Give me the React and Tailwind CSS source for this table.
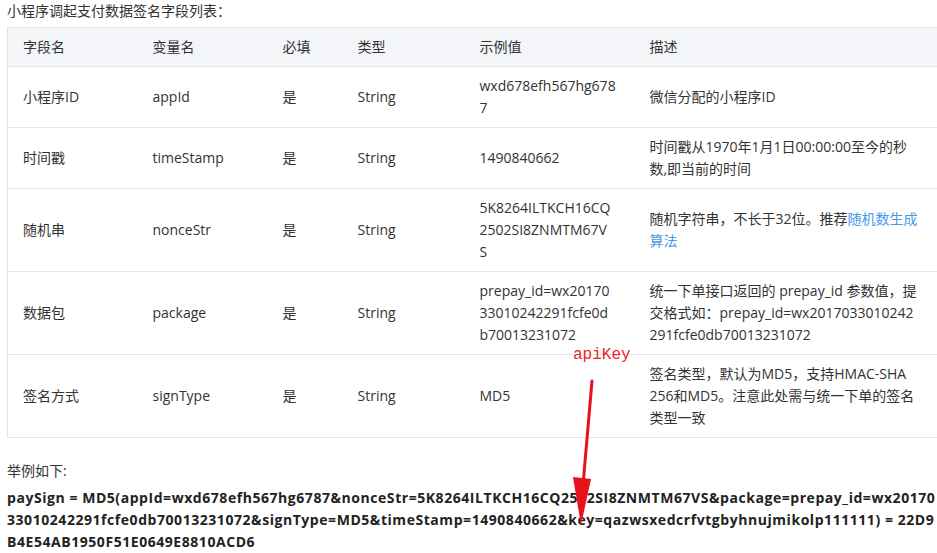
import React from "react";

const Link = ({ children }) => <span className="text-[#459ae9]">{children}</span>;

const rows = [
  { name: "小程序ID", key: "appId", ex: ["wxd678efh567hg678", "7"], desc: ["微信分配的小程序ID"] },
  { name: "时间戳", key: "timeStamp", ex: ["1490840662"], desc: ["时间戳从1970年1月1日00:00:00至今的秒", "数,即当前的时间"] },
  {
    name: "随机串",
    key: "nonceStr",
    ex: ["5K8264ILTKCH16CQ", "2502SI8ZNMTM67V", "S"],
    desc: [<>随机字符串，不长于32位。推荐<Link>随机数生成</Link></>, <Link>算法</Link>],
  },
  {
    name: "数据包",
    key: "package",
    ex: ["prepay_id=wx20170", "33010242291fcfe0d", "b70013231072"],
    desc: ["统一下单接口返回的 prepay_id 参数值，提", "交格式如：prepay_id=wx2017033010242", "291fcfe0db70013231072"],
  },
  {
    name: "签名方式",
    key: "signType",
    ex: ["MD5"],
    desc: ["签名类型，默认为MD5，支持HMAC-SHA", "256和MD5。注意此处需与统一下单的签名", "类型一致"],
  },
];

const cell = "px-[15px] py-2 align-middle text-left font-normal";

const Lines = ({ lines }) => (
  <>
    {lines.map((l, i) => (
      <span key={i} className="block whitespace-nowrap">
        {l}
      </span>
    ))}
  </>
);

export default function App() {
  return (
    <div
      className="relative w-[937px] h-[553px] overflow-hidden bg-white text-[14px] leading-[22px] text-[#333]"
      style={{ fontFamily: '"Open Sans", "Noto Sans CJK SC", sans-serif' }}
    >
      <div className="pl-[7px]">
        <p>小程序调起支付数据签名字段列表：</p>
        <table className="mt-[5px] w-[946px] table-fixed border-collapse border-l border-[#e5e5e5]">
          <colgroup>
            <col className="w-[130px]" />
            <col className="w-[130px]" />
            <col className="w-[75px]" />
            <col className="w-[122px]" />
            <col className="w-[170px]" />
            <col />
          </colgroup>
          <thead>
            <tr className="bg-[#f4f5f9] border-y border-[#e5e5e5]">
              <th className={cell}>字段名</th>
              <th className={cell}>变量名</th>
              <th className={cell}>必填</th>
              <th className={cell}>类型</th>
              <th className={cell}>示例值</th>
              <th className={cell}>描述</th>
            </tr>
          </thead>
          <tbody>
            {rows.map((r) => (
              <tr key={r.key} className="border-b border-[#e5e5e5]">
                <td className={cell}>{r.name}</td>
                <td className={cell}>{r.key}</td>
                <td className={cell}>是</td>
                <td className={cell}>String</td>
                <td className={cell}>
                  <Lines lines={r.ex} />
                </td>
                <td className={cell}>
                  <Lines lines={r.desc} />
                </td>
              </tr>
            ))}
          </tbody>
        </table>
        <p className="mt-[22px]">举例如下:</p>
        <p className="mt-[5px] font-bold text-[#222] tracking-[0.55px]">
          <span className="block whitespace-nowrap">
            paySign = MD5(appId=wxd678efh567hg6787&amp;nonceStr=5K8264ILTKCH16CQ2502SI8ZNMTM67VS&amp;package=prepay_id=wx20170
          </span>
          <span className="block whitespace-nowrap">
            33010242291fcfe0db70013231072&amp;signType=MD5&amp;timeStamp=1490840662&amp;key=qazwsxedcrfvtgbyhnujmikolp111111) = 22D9
          </span>
          <span className="block whitespace-nowrap">B4E54AB1950F51E0649E8810ACD6</span>
        </p>
      </div>

      <div
        className="absolute left-[573px] top-[345px] text-[16px] leading-[20px] text-[#e8232a]"
        style={{ fontFamily: '"Liberation Mono", monospace' }}
      >
        apiKey
      </div>
      <svg className="absolute left-[565px] top-[375px]" width="40" height="155" viewBox="0 0 40 155">
        <line x1="27" y1="6" x2="18" y2="110" stroke="#e8101a" strokeWidth="3" strokeLinecap="round" />
        <polygon points="8,102 26,104 16,150" fill="#e8101a" />
      </svg>
    </div>
  );
}
